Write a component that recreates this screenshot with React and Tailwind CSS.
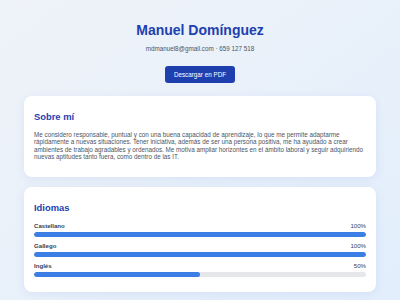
const LANGS = [
  { name: 'Castellano', level: 100 },
  { name: 'Gallego', level: 100 },
  { name: 'Inglés', level: 50 },
];

export default function App() {
  return (
    <div
      className="min-h-screen bg-gradient-to-br from-[#eff3f8] to-[#e2eefc] px-[24px] pb-[8px] text-[#374151]"
      style={{ fontFamily: '"Liberation Sans", Arial, sans-serif' }}
    >
      <header className="flex flex-col items-center pt-[22px] text-center">
        <h1 className="text-[14px] font-bold leading-[17px] text-[#1e40af]">Manuel Domínguez</h1>
        <p className="mt-[5px] text-[6.3px] leading-[9px] text-[#4b5563]">
          mdmanuel8@gmail.com · 659 127 518
        </p>
        <button className="mt-[13px] h-[17px] rounded-[3px] bg-[#1e40af] px-[8.5px] text-[6.3px] leading-[17px] text-white">
          Descargar en PDF
        </button>
      </header>

      <main className="mt-[13px] flex flex-col gap-[10px]">
        <section className="rounded-[8px] bg-white px-[10px] pb-[16px] pt-[15px] shadow-[0_2px_10px_rgba(30,64,175,0.08)]">
          <h2 className="text-[9.4px] font-bold leading-[12px] text-[#1e40af]">Sobre mí</h2>
          <p className="mt-[7.5px] text-[6.3px] leading-[7.6px] text-[#4b5563]">
            Me considero responsable, puntual y con una buena capacidad de aprendizaje, lo que me permite adaptarme
            rápidamente a nuevas situaciones. Tener iniciativa, además de ser una persona positiva, me ha ayudado a crear
            ambientes de trabajo agradables y ordenados. Me motiva ampliar horizontes en el ámbito laboral y seguir adquiriendo
            nuevas aptitudes tanto fuera, como dentro de las IT.
          </p>
        </section>

        <section className="rounded-[8px] bg-white px-[10px] pb-[15.5px] pt-[15.5px] shadow-[0_2px_10px_rgba(30,64,175,0.08)]">
          <h2 className="text-[9.4px] font-bold leading-[12px] text-[#1e40af]">Idiomas</h2>
          <div className="mt-[8px] flex flex-col gap-[5.5px]">
            {LANGS.map((l) => (
              <div key={l.name}>
                <div className="flex justify-between text-[6.1px] leading-[8px]">
                  <span className="font-bold text-[#374151]">{l.name}</span>
                  <span className="text-[#374151]">{l.level}%</span>
                </div>
                <div className="mt-[2px] h-[4.5px] overflow-hidden rounded-full bg-[#e5e7eb]">
                  <div className="h-full rounded-full bg-[#3b7ee6]" style={{ width: `${l.level}%` }} />
                </div>
              </div>
            ))}
          </div>
        </section>
      </main>
    </div>
  );
}
